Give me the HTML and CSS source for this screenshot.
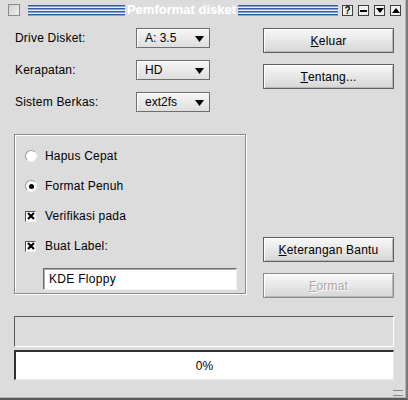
FILE: index.html
```html
<!DOCTYPE html>
<html>
<head>
<meta charset="utf-8">
<link rel="stylesheet" href="styles.css">
</head>
<body>
<div class="window">
  <div class="titlebar">
    <span class="tb-menu"></span>
    <span class="stripes"></span>
    <span class="title">Pemformat disket</span>
    <span class="stripes"></span>
    <span class="tb-btns">
      <span class="tb-btn">?</span>
      <span class="tb-btn"><svg width="7" height="7" viewBox="0 0 7 7"><rect x="0" y="3" width="7" height="2" fill="#000"/></svg></span>
      <span class="tb-btn"><svg width="8" height="7" viewBox="0 0 8 7"><path d="M0 1 H8 L4 6 Z" fill="#000"/></svg></span>
      <span class="tb-btn"><svg width="8" height="7" viewBox="0 0 8 7"><path d="M0 6 H8 L4 1 Z" fill="#000"/></svg></span>
    </span>
  </div>

  <div class="main">
    <div class="left">
      <div class="field">
        <span class="label">Drive Disket:</span>
        <span class="combo"><span>A: 3.5</span><svg width="9" height="6" viewBox="0 0 9 6"><path d="M0 0 H9 L4.5 6 Z" fill="#000"/></svg></span>
      </div>
      <div class="field">
        <span class="label">Kerapatan:</span>
        <span class="combo"><span>HD</span><svg width="9" height="6" viewBox="0 0 9 6"><path d="M0 0 H9 L4.5 6 Z" fill="#000"/></svg></span>
      </div>
      <div class="field">
        <span class="label">Sistem Berkas:</span>
        <span class="combo"><span>ext2fs</span><svg width="9" height="6" viewBox="0 0 9 6"><path d="M0 0 H9 L4.5 6 Z" fill="#000"/></svg></span>
      </div>

      <div class="group">
        <div class="opt"><span class="radio"></span><span>Hapus Cepat</span></div>
        <div class="opt"><span class="radio on"></span><span>Format Penuh</span></div>
        <div class="opt"><span class="check"><svg width="8" height="8" viewBox="0 0 8 8"><path d="M1 1 L7 7 M7 1 L1 7" stroke="#000" stroke-width="2.2"/></svg></span><span>Verifikasi pada</span></div>
        <div class="opt"><span class="check"><svg width="8" height="8" viewBox="0 0 8 8"><path d="M1 1 L7 7 M7 1 L1 7" stroke="#000" stroke-width="2.2"/></svg></span><span>Buat Label:</span></div>
        <div class="input">KDE Floppy</div>
      </div>
    </div>

    <div class="right">
      <div class="btn"><span class="u">K</span>eluar</div>
      <div class="btn gap1"><span class="u">T</span>entang...</div>
      <div class="spacer"></div>
      <div class="btn"><span class="u">K</span>eterangan Bantu</div>
      <div class="btn gap1 disabled"><span class="u">F</span>ormat</div>
    </div>
  </div>

  <div class="status"></div>
  <div class="progress">0%</div>
  <div class="grip"></div>
</div>
</body>
</html>
```

FILE: styles.css
```css
html, body {
  margin: 0;
  padding: 0;
  width: 408px;
  height: 400px;
  background: #dcdcdc;
  font-family: "Liberation Sans", Arial, sans-serif;
  font-size: 12px;
  color: #000;
  overflow: hidden;
}

.window {
  position: relative;
  box-sizing: border-box;
  width: 408px;
  height: 400px;
  background: #dcdcdc;
  border-right: 2px solid #7a7a7a;
  border-bottom: 2px solid #5a5a5a;
  box-shadow: inset -1px -1px 0 #b4b4b4;
}

/* ---------- title bar ---------- */
.titlebar {
  display: flex;
  align-items: center;
  height: 19px;
  padding-left: 8px;
}
.tb-menu {
  box-sizing: border-box;
  width: 12px;
  height: 12px;
  border: 1px solid #8a8a8a;
  background: linear-gradient(135deg, #cfcfcf, #f0f0f0);
  margin-top: 1px;
}
.stripes {
  height: 11px;
  margin-top: 1px;
  background: repeating-linear-gradient(to bottom,
    #3c5c98 0px, #3c5c98 1px,
    #7fa6dc 1px, #7fa6dc 2px,
    #e8eef8 2px, #e8eef8 3px);
}
.titlebar .stripes:nth-of-type(2) {
  width: 97px;
  margin-left: 8px;
}
.titlebar .stripes:nth-of-type(4) {
  width: 100px;
}
.title {
  width: 113px;
  text-align: center;
  color: #fff;
  font-weight: bold;
  font-size: 13px;
  text-shadow: 0 0 1px #e8e8e8;
}
.tb-btns {
  display: flex;
  gap: 5px;
  margin-left: 4px;
  margin-top: 1px;
}
.tb-btn {
  box-sizing: border-box;
  width: 11px;
  height: 11px;
  border: 1px solid #404040;
  background: #f0f0f0;
  display: flex;
  align-items: center;
  justify-content: center;
  font-size: 10px;
  font-weight: bold;
  line-height: 9px;
}

/* ---------- main ---------- */
.main {
  display: flex;
  padding: 9px 0 0 14px;
  height: 279px;
}
.left {
  width: 232px;
  display: flex;
  flex-direction: column;
}
.field {
  display: flex;
  align-items: center;
  height: 20px;
  margin-bottom: 12px;
  margin-left: 1px;
}
.label {
  width: 121px;
  letter-spacing: 0.2px;
}
.combo {
  box-sizing: border-box;
  width: 74px;
  height: 20px;
  border: 1px solid #6e6e6e;
  background: linear-gradient(#f6f6f6, #dedede);
  box-shadow: inset 1px 1px 0 #fff;
  display: flex;
  align-items: center;
  justify-content: space-between;
  padding: 0 5px 0 8px;
}
.combo svg { margin-top: 1px; }

.group {
  box-sizing: border-box;
  margin-top: 10px;
  height: 160px;
  border: 1px solid #8a8a8a;
  box-shadow: inset 1px 1px 0 #fff, 1px 1px 0 #fff;
  padding: 15px 0 0 10px;
}
.opt {
  display: flex;
  align-items: center;
  height: 12px;
  margin-bottom: 18px;
  letter-spacing: 0.2px;
}
.opt > span:last-child { margin-left: 8px; }
.radio {
  box-sizing: border-box;
  width: 12px;
  height: 12px;
  border-radius: 50%;
  background: #fff;
  border: 1px solid;
  border-color: #9a9a9a #f4f4f4 #f4f4f4 #9a9a9a;
  position: relative;
}
.radio.on::after {
  content: "";
  position: absolute;
  left: 2.5px;
  top: 2.5px;
  width: 5px;
  height: 5px;
  border-radius: 50%;
  background: #000;
}
.check {
  box-sizing: border-box;
  width: 11px;
  height: 11px;
  background: #fff;
  border: 1px solid;
  border-color: #505050 #f4f4f4 #f4f4f4 #505050;
  display: flex;
  align-items: center;
  justify-content: center;
  margin-right: 1px;
}
.input {
  box-sizing: border-box;
  margin-left: 18px;
  margin-top: -2px;
  width: 194px;
  height: 22px;
  background: #fff;
  border: 1px solid;
  border-color: #6a6a6a #f4f4f4 #f4f4f4 #6a6a6a;
  box-shadow: inset 1px 1px 0 #b0b0b0;
  padding: 3px 0 0 5px;
  font-size: 12px;
  letter-spacing: 0.3px;
}

.right {
  margin-left: 17px;
  width: 131px;
  display: flex;
  flex-direction: column;
}
.btn {
  box-sizing: border-box;
  height: 25px;
  border: 1px solid #606060;
  background: linear-gradient(#f8f8f8, #d6d6d6);
  box-shadow: inset 1px 1px 0 #fff, inset -1px -1px 0 #b8b8b8;
  display: flex;
  align-items: center;
  justify-content: center;
  letter-spacing: 0.2px;
}
.gap1 { margin-top: 11px; }
.spacer { height: 148px; }
.u { text-decoration: underline; }
.btn.disabled {
  color: #a8a8a8;
  text-shadow: 1px 1px 0 #fff;
  border-color: #8a8a8a;
}

/* ---------- bottom ---------- */
.status {
  box-sizing: border-box;
  margin: 9px 0 0 14px;
  width: 380px;
  height: 31px;
  border: 1px solid;
  border-color: #5a5a5a #fff #fff #5a5a5a;
}
.progress {
  box-sizing: border-box;
  margin: 3px 0 0 14px;
  width: 380px;
  height: 30px;
  background: #fff;
  border-top: 2px solid #303030;
  border-left: 2px solid #303030;
  border-right: 1px solid #e8e8e8;
  border-bottom: 1px solid #e8e8e8;
  display: flex;
  align-items: center;
  justify-content: center;
  font-size: 12px;
}
.grip {
  position: absolute;
  right: 3px;
  bottom: 2px;
  width: 10px;
  height: 4px;
  border-top: 1px solid #888;
  border-bottom: 1px solid #888;
}
```
